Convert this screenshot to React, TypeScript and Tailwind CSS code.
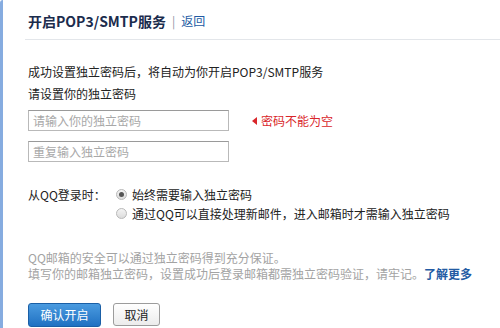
import { useState } from 'react';

const font = { fontFamily: '"Noto Sans CJK SC", "Liberation Sans", sans-serif' };

function Radio({ checked, label, onClick }: { checked: boolean; label: string; onClick: () => void }) {
  return (
    <button type="button" onClick={onClick} className="flex items-center gap-[5px] h-[19px] text-[12px] text-[#222]">
      <span className="w-[11px] h-[11px] rounded-full border border-[#b8b8b8] bg-gradient-to-b from-[#f4f4f4] to-[#dcdcdc] flex items-center justify-center">
        {checked && <span className="w-[5px] h-[5px] rounded-full bg-[#555]" />}
      </span>
      {label}
    </button>
  );
}

export default function App() {
  const [mode, setMode] = useState(0);

  return (
    <div className="w-[500px] h-[328px] bg-white flex overflow-hidden" style={font}>
      <div className="w-[3px] h-full bg-[#86ace0] rounded-tl-[3px] shrink-0" />
      <div className="flex-1 flex flex-col">
        <div className="h-[40px] ml-[22px] flex items-center gap-[6px] border-b border-[#e3e6ea] pt-[3px]">
          <span className="pl-[3px] text-[14px] font-bold text-[#1b2c4d]">开启POP3/SMTP服务</span>
          <span className="text-[12px] text-[#8a94a4]">|</span>
          <a className="text-[12px] text-[#235ba3] cursor-pointer">返回</a>
        </div>

        <div className="pl-[25px] flex flex-col">
          <p className="mt-[23px] text-[12px] leading-[18px] text-[#222]">成功设置独立密码后，将自动为你开启POP3/SMTP服务</p>
          <p className="mt-[4px] text-[12px] leading-[18px] text-[#222]">请设置你的独立密码</p>

          <div className="mt-[7px] flex items-center">
            <input
              type="password"
              placeholder="请输入你的独立密码"
              className="w-[201px] h-[21px] border border-[#b9b9b9] border-t-[#9a9a9a] px-[4px] text-[12px] placeholder:text-[#a8a8a8] outline-none"
            />
            <span className="ml-[23px] flex items-center gap-[4px] text-[12px] text-[#d9262a]">
              <span className="w-0 h-0 border-y-[4px] border-y-transparent border-r-[5px] border-r-[#d9262a]" />
              密码不能为空
            </span>
          </div>
          <input
            type="password"
            placeholder="重复输入独立密码"
            className="mt-[10px] w-[201px] h-[21px] border border-[#b9b9b9] border-t-[#9a9a9a] px-[4px] text-[12px] placeholder:text-[#a8a8a8] outline-none"
          />

          <div className="mt-[23px] flex">
            <span className="w-[88px] text-[12px] leading-[19px] text-[#222]">从QQ登录时：</span>
            <div className="flex flex-col">
              <Radio checked={mode === 0} label="始终需要输入独立密码" onClick={() => setMode(0)} />
              <Radio checked={mode === 1} label="通过QQ可以直接处理新邮件，进入邮箱时才需输入独立密码" onClick={() => setMode(1)} />
            </div>
          </div>

          <div className="mt-[27px] text-[12px] leading-[16px] text-[#a3a3a3]">
            <p>QQ邮箱的安全可以通过独立密码得到充分保证。</p>
            <p>
              填写你的邮箱独立密码，设置成功后登录邮箱都需独立密码验证，请牢记。
              <a className="font-bold text-[#235ba3] cursor-pointer">了解更多</a>
            </p>
          </div>

          <div className="mt-[21px] flex gap-[12px]">
            <button
              type="button"
              className="w-[73px] h-[24px] rounded-[3px] border border-[#1a5fa6] bg-gradient-to-b from-[#4a9be0] to-[#1f71c2] text-white text-[12px]"
            >
              确认开启
            </button>
            <button
              type="button"
              className="w-[47px] h-[23px] rounded-[3px] border border-[#9c9c9c] bg-gradient-to-b from-white to-[#ececec] text-[#222] text-[12px]"
            >
              取消
            </button>
          </div>
        </div>
      </div>
    </div>
  );
}
